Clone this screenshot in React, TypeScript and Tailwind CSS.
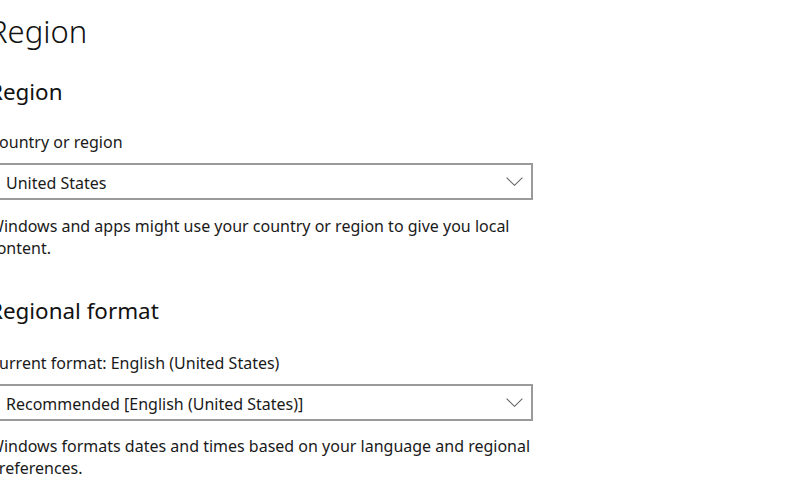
import React from "react";

function Chevron() {
  return (
    <svg width="17" height="9" viewBox="0 0 17 9" fill="none" className="shrink-0">
      <path d="M0.6 0.6 L8.5 8.3 L16.4 0.6" stroke="#666666" strokeWidth="1.1" />
    </svg>
  );
}

function Dropdown({ value }: { value: string }) {
  return (
    <div className="flex h-[37px] w-[544px] items-center justify-between border-2 border-[#9a9a9a] bg-white pl-[15px] pr-[8px]">
      <span className="pt-[3px] text-[16px] leading-[20px] text-[#1a1a1a]">{value}</span>
      <span className="pt-[1px]">
        <Chevron />
      </span>
    </div>
  );
}

export default function App() {
  return (
    <div
      className="h-[500px] w-[800px] overflow-hidden bg-white text-black"
      style={{ fontFamily: '"Noto Sans", "Open Sans", sans-serif' }}
    >
      <div className="ml-[-11px] flex flex-col">
        <h1 className="mt-[11px] text-[31px] leading-[40px] font-light text-[#111]">Region</h1>
        <h2 className="mt-[26px] text-[22.4px] leading-[30px] text-[#111]">Region</h2>
        <div className="mt-[24.5px] text-[16px] leading-[20px] text-[#1a1a1a]">Country or region</div>
        <div className="mt-[11px]">
          <Dropdown value="United States" />
        </div>
        <p className="mt-[15px] w-[550px] text-[16px] leading-[22px] text-[#1a1a1a]">
          Windows and apps might use your country or region to give you local content.
        </p>
        <h2 className="mt-[37.5px] text-[22.4px] leading-[30px] text-[#111]">Regional format</h2>
        <div className="mt-[26.5px] text-[16px] leading-[20px] text-[#1a1a1a]">
          Current format: English (United States)
        </div>
        <div className="mt-[11px]">
          <Dropdown value="Recommended [English (United States)]" />
        </div>
        <p className="mt-[14px] w-[550px] text-[16px] leading-[22px] text-[#1a1a1a]">
          Windows formats dates and times based on your language and regional preferences.
        </p>
      </div>
    </div>
  );
}
